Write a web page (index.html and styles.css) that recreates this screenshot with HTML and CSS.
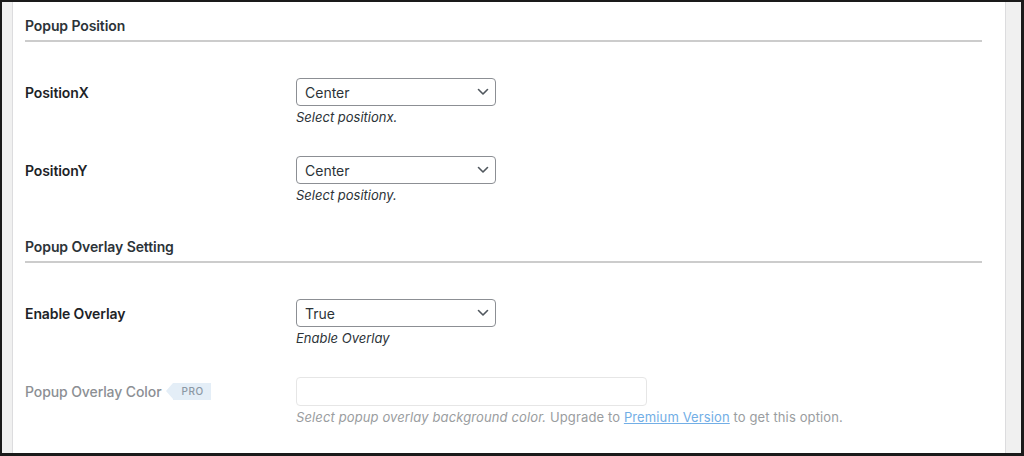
FILE: index.html
```html
<!DOCTYPE html>
<html lang="en">
<head>
  <meta charset="UTF-8" />
  <title>Popup Settings</title>
  <link rel="stylesheet" href="styles.css">
</head>
<body>
  <div class="frame">
    <div class="gutter gutter-left"></div>

    <main class="panel">
      <!-- Popup position -->
      <section class="section">
        <h2 class="section-title">Popup Position</h2>
        <div class="form-table">
          <div class="row">
            <label class="row-label" for="posx">PositionX</label>
            <div class="row-field">
              <div class="select">
                <span>Center</span>
                <svg class="chevron" viewBox="0 0 12 8" width="12" height="8"><path d="M1.5 1.5 L6 6 L10.5 1.5" /></svg>
              </div>
              <p class="description">Select positionx.</p>
            </div>
          </div>
          <div class="row">
            <label class="row-label" for="posy">PositionY</label>
            <div class="row-field">
              <div class="select">
                <span>Center</span>
                <svg class="chevron" viewBox="0 0 12 8" width="12" height="8"><path d="M1.5 1.5 L6 6 L10.5 1.5" /></svg>
              </div>
              <p class="description">Select positiony.</p>
            </div>
          </div>
        </div>
      </section>

      <!-- Overlay -->
      <section class="section">
        <h2 class="section-title">Popup Overlay Setting</h2>
        <div class="form-table">
          <div class="row">
            <label class="row-label" for="overlay">Enable Overlay</label>
            <div class="row-field">
              <div class="select">
                <span>True</span>
                <svg class="chevron" viewBox="0 0 12 8" width="12" height="8"><path d="M1.5 1.5 L6 6 L10.5 1.5" /></svg>
              </div>
              <p class="description">Enable Overlay</p>
            </div>
          </div>
          <div class="row row-disabled">
            <div class="row-label">
              Popup Overlay Color
              <span class="pro-badge">PRO</span>
            </div>
            <div class="row-field">
              <div class="text-input"></div>
              <p class="description"><em>Select popup overlay background color.</em> Upgrade to <a href="#">Premium Version</a> to get this option.</p>
            </div>
          </div>
        </div>
      </section>
    </main>

    <div class="gutter gutter-right"></div>
  </div>
</body>
</html>
```

FILE: styles.css
```css
html, body {
  margin: 0;
  padding: 0;
  height: 100%;
  background: #1a1a1a;
  font-family: Inter, "Noto Sans", sans-serif;
  color: #1d2327;
}

.frame {
  box-sizing: border-box;
  height: 456px;
  display: flex;
  border-top: 2px solid #1a1a1a;
  border-left: 2px solid #1a1a1a;
  border-right: 3px solid #1a1a1a;
  border-bottom: 3px solid #1a1a1a;
  background: #fff;
}

.gutter {
  background: #f0f0f0;
}

.gutter-left {
  width: 10px;
  border-right: 1px solid #dcdcde;
}

.gutter-right {
  width: 15px;
  border-left: 1px solid #dcdcde;
}

.panel {
  flex: 1;
  padding: 14px 23px 0 12px;
  overflow: hidden;
}

/* === Sections === */
.section + .section {
  margin-top: 18px;
}

.section-title {
  margin: 0;
  font-size: 14px;
  line-height: 20px;
  font-weight: 600;
  color: #2c3338;
  padding-bottom: 4px;
  border-bottom: 2px solid #cccccc;
  letter-spacing: -0.1px;
}

.form-table {
  margin-top: 21px;
}

.row {
  display: flex;
  padding: 15px 0;
}

.row-label {
  width: 271px;
  flex-shrink: 0;
  display: flex;
  align-items: center;
  height: 28px;
  font-size: 14px;
  font-weight: 600;
  color: #1d2327;
  letter-spacing: -0.1px;
}

.row-field {
  flex: 1;
}

/* Select box */
.select {
  box-sizing: border-box;
  width: 200px;
  height: 28px;
  border: 1px solid #8c8f94;
  border-radius: 4px;
  display: flex;
  align-items: center;
  justify-content: space-between;
  padding: 0 6px 0 8px;
  font-size: 14px;
  color: #2c3338;
}

.chevron {
  fill: none;
  stroke: #50575e;
  stroke-width: 1.6;
  stroke-linecap: round;
  stroke-linejoin: round;
}

.description {
  margin: 2px 0 0;
  font-size: 13px;
  line-height: 18px;
  font-style: italic;
  color: #2c3338;
}

/* Pro / disabled row */
.row-disabled .row-label {
  color: #8c8f94;
  font-weight: 500;
  height: 29px;
}

.pro-badge {
  position: relative;
  margin-left: 12px;
  display: inline-block;
  height: 17px;
  line-height: 17px;
  padding: 0 7px 0 8px;
  background: #e4eef7;
  color: #8c98a4;
  font-size: 10px;
  font-weight: 500;
  letter-spacing: 0.6px;
}

.pro-badge::before {
  content: "";
  position: absolute;
  left: -7px;
  top: 0;
  border-top: 8.5px solid transparent;
  border-bottom: 8.5px solid transparent;
  border-right: 7px solid #e4eef7;
}

.text-input {
  box-sizing: border-box;
  width: 351px;
  height: 29px;
  border: 1px solid #e6e6e6;
  border-radius: 4px;
  background: #fff;
}

.row-disabled .description {
  font-style: normal;
  color: #9a9da0;
  letter-spacing: 0.12px;
}

.row-disabled .description em {
  font-style: italic;
}

.row-disabled .description a {
  color: #72aee6;
  text-decoration: underline;
}
```
